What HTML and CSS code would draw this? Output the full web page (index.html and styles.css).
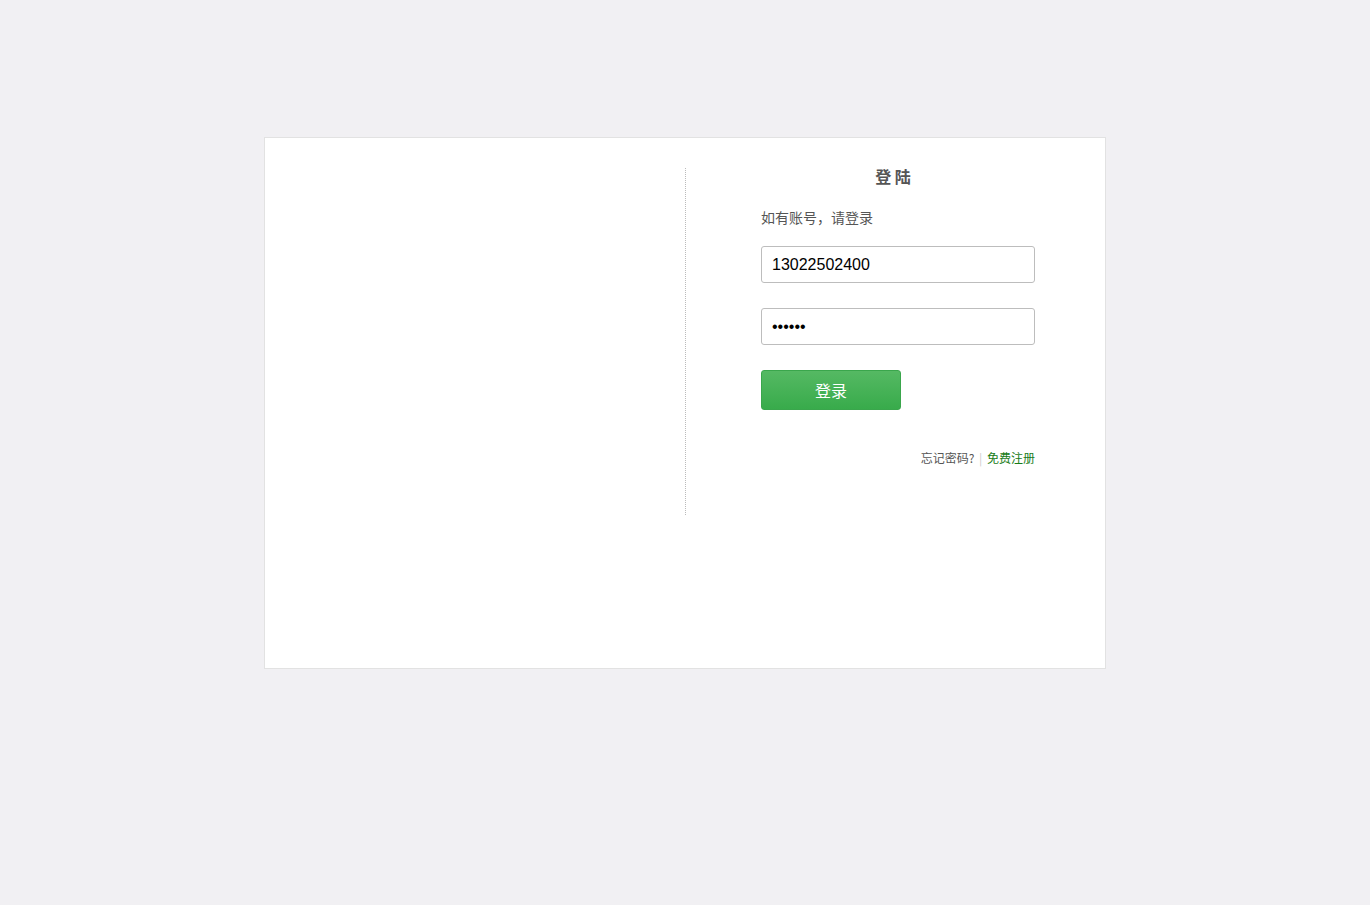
FILE: index.html
```html
<!DOCTYPE html>
<html lang="zh-CN">
<head>
    <meta charset="UTF-8">
    <meta name="viewport" content="width=device-width, initial-scale=1.0">
    <title>登陆</title>
    <link rel="stylesheet" href="styles.css">
</head>
<body>
    <div class="login-box">
        <div class="login-side"></div>
        <div class="login-main">
            <h2 class="login-title">登 陆</h2>
            <p class="login-tip">如有账号，请登录</p>
            <form class="login-form">
                <input class="login-input" type="text" value="13022502400">
                <input class="login-input" type="password" value="123456">
                <button class="login-btn" type="button">登录</button>
            </form>
            <div class="login-links">
                <a href="#" class="link-forget">忘记密码?</a>
                <span class="link-sep">|</span>
                <a href="#" class="link-reg">免费注册</a>
            </div>
        </div>
    </div>
</body>
</html>
```

FILE: styles.css
```css
body {
    font-family: "Noto Sans CJK SC", "Liberation Sans", sans-serif;
    background-color: #f1f0f3;
    color: #555;
    margin: 0;
    padding-top: 137px;
}
.login-box {
    width: 840px;
    height: 500px;
    margin: 0 auto;
    background-color: #fff;
    border: 1px solid #e2e2e2;
    padding-top: 30px;
    display: flex;
    align-items: flex-start;
}
.login-side {
    width: 420px;
    height: 347px;
    border-right: 1px dotted #bbb;
}
.login-main {
    width: 274px;
    padding-left: 75px;
}
.login-title {
    margin: 0;
    padding-right: 10px;
    font-size: 16px;
    line-height: 17px;
    font-weight: bold;
    text-align: center;
    color: #555;
}
.login-tip {
    margin: 22px 0 0;
    font-size: 14px;
    line-height: 20px;
    color: #555;
}
.login-form {
    margin-top: 19px;
    display: flex;
    flex-direction: column;
    gap: 25px;
}
.login-input {
    box-sizing: border-box;
    width: 274px;
    height: 37px;
    border: 1px solid #bdbdbd;
    border-radius: 3px;
    padding: 0 10px;
    font-family: "Liberation Sans", Arial, sans-serif;
    font-size: 16px;
    color: #000;
    outline: none;
}
.login-btn {
    width: 140px;
    height: 40px;
    border: 1px solid #3aa64c;
    border-radius: 3px;
    background: linear-gradient(#55b963, #38ab4b);
    color: #fff;
    font-family: "Noto Sans CJK SC", sans-serif;
    font-size: 16px;
    cursor: pointer;
}
.login-links {
    margin-top: 38px;
    text-align: right;
    font-size: 12px;
    line-height: 20px;
}
.login-links a {
    text-decoration: none;
}
.link-forget {
    color: #555;
}
.link-sep {
    color: #ccc;
    margin: 0 2px;
}
.link-reg {
    color: #187c18;
}
```
